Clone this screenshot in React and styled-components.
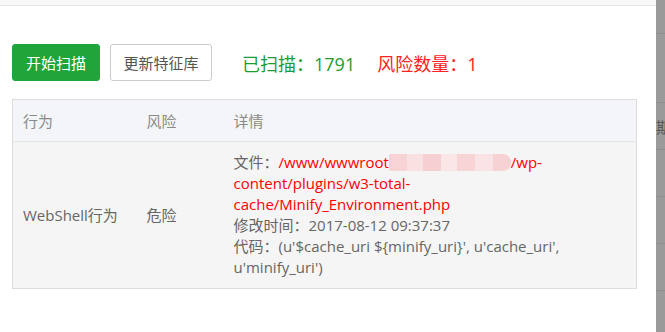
import React from "react";
import styled, { createGlobalStyle } from "styled-components";

const GlobalStyle = createGlobalStyle`
	html, body {
		margin: 0;
		padding: 0;
		background: #fff;
	}
	body {
		font-family: "Open Sans", "Noto Sans CJK SC", sans-serif;
	}
`;

const Page = styled.div`
	display: flex;
	width: 665px;
	height: 332px;
	overflow: hidden;
`;

const Modal = styled.div`
	width: 656px;
	flex-shrink: 0;
	background: #fff;
	display: flex;
	flex-direction: column;
`;

const ModalHead = styled.div`
	height: 5px;
	background: #f8f8f8;
	border-bottom: 1px solid #e6e6e6;
`;

const Body = styled.div`
	padding: 38px 19px 0 12px;
`;

const Toolbar = styled.div`
	display: flex;
	align-items: center;
	height: 37px;
`;

const Button = styled.button`
	width: ${(props) => props.w}px;
	height: 37px;
	padding: 0;
	margin-right: 10px;
	border-radius: 3px;
	border: 1px solid ${(props) => (props.primary ? "#20a53a" : "#ccc")};
	background: ${(props) => (props.primary ? "#20a53a" : "#fff")};
	color: ${(props) => (props.primary ? "#fff" : "#555")};
	font-family: inherit;
	font-size: 15px;
	cursor: pointer;
`;

const Stat = styled.span`
	font-size: 18px;
	color: ${(props) => props.color};
	margin-left: ${(props) => props.gap}px;
`;

const Table = styled.table`
	margin-top: 18px;
	width: 625px;
	border-collapse: collapse;
	table-layout: fixed;
	border: 1px solid #ddd;
	font-size: 15px;
`;

const Th = styled.th`
	height: 41px;
	padding: 0 10px;
	text-align: left;
	font-weight: normal;
	color: #8a8a8a;
	background: #f4f5f9;
	border-bottom: 1px solid #e6e6e6;
`;

const Td = styled.td`
	padding: 10px;
	background: #f5f5f5;
	color: #666;
	vertical-align: middle;
	line-height: 21px;
`;

const Danger = styled.span`
	color: #f00;
`;

const Mosaic = styled.span`
	display: inline-block;
	width: 122px;
	height: 17px;
	vertical-align: -3px;
	background: linear-gradient(
		90deg,
		#f7d3d5 0 18px,
		#f9e0e1 18px 34px,
		#f6cfd2 34px 52px,
		#fbe6e7 52px 68px,
		#f7d5d7 68px 86px,
		#fae3e4 86px 104px,
		#f7d2d4 104px 122px
	);
	border-radius: 2px 8px 8px 2px;
`;

const Overlay = styled.div`
	flex: 1;
	background: #9a9a9a;
	display: flex;
	flex-direction: column;
`;

const OverlayRow = styled.div`
	height: ${(props) => props.h}px;
	flex-shrink: 0;
	border-bottom: 1px solid #8c8c8c;
	overflow: hidden;
	white-space: nowrap;
	display: flex;
	align-items: center;
	font-size: 15px;
	color: #555;
`;

const rows = [33, 68, 46, 46, 46, 46];

export default function App() {
	return (
		<Page>
			<GlobalStyle />
			<Modal>
				<ModalHead />
				<Body>
					<Toolbar>
						<Button primary w={88}>开始扫描</Button>
						<Button w={102}>更新特征库</Button>
						<Stat color="#1d9c2f" gap={20}>已扫描：1791</Stat>
						<Stat color="#f22" gap={22}>风险数量：1</Stat>
					</Toolbar>
					<Table>
						<colgroup>
							<col style={{ width: 124 }} />
							<col style={{ width: 87 }} />
							<col style={{ width: 346 }} />
							<col />
						</colgroup>
						<thead>
							<tr>
								<Th>行为</Th>
								<Th>风险</Th>
								<Th>详情</Th>
								<Th />
							</tr>
						</thead>
						<tbody>
							<tr>
								<Td>WebShell行为</Td>
								<Td>危险</Td>
								<Td>
									文件：<Danger>/www/wwwroot<Mosaic />/wp-content/plugins/w3-total-cache/Minify_Environment.php</Danger>
									<br />
									修改时间：2017-08-12 09:37:37
									<br />
									代码：(u'$cache_uri ${"{"}minify_uri{"}"}', u'cache_uri', u'minify_uri')
								</Td>
								<Td />
							</tr>
						</tbody>
					</Table>
				</Body>
			</Modal>
			<Overlay>
				{rows.map((h, i) => (
					<OverlayRow key={i} h={h}>
						{i === 2 ? "期" : ""}
					</OverlayRow>
				))}
			</Overlay>
		</Page>
	);
}
